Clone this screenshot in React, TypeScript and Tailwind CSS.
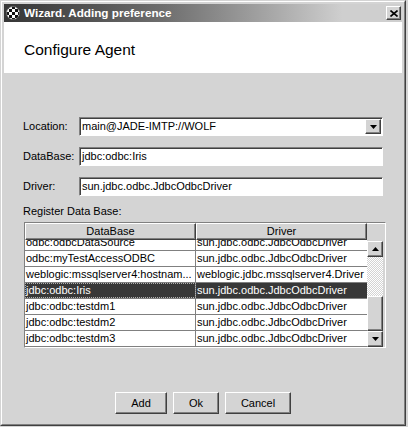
import React from "react";

const SUNKEN =
  "border border-t-[#808080] border-l-[#808080] border-b-white border-r-white shadow-[inset_1px_1px_0_#404040] bg-white";
const RAISED =
  "border border-t-white border-l-white border-b-[#404040] border-r-[#404040] shadow-[inset_-1px_-1px_0_#808080] bg-[#d4d4d4]";

const ROWS = [
  ["odbc:odbcDataSource", "sun.jdbc.odbc.JdbcOdbcDriver"],
  ["odbc:myTestAccessODBC", "sun.jdbc.odbc.JdbcOdbcDriver"],
  ["weblogic:mssqlserver4:hostnam...", "weblogic.jdbc.mssqlserver4.Driver"],
  ["jdbc:odbc:Iris", "sun.jdbc.odbc.JdbcOdbcDriver"],
  ["jdbc:odbc:testdm1", "sun.jdbc.odbc.JdbcOdbcDriver"],
  ["jdbc:odbc:testdm2", "sun.jdbc.odbc.JdbcOdbcDriver"],
  ["jdbc:odbc:testdm3", "sun.jdbc.odbc.JdbcOdbcDriver"],
];
const SELECTED = 3;

function Arrow({ dir }: { dir: "up" | "down" }) {
  return (
    <svg width="7" height="4" viewBox="0 0 7 4">
      {dir === "down" ? <path d="M0 0h7L3.5 4z" fill="#000" /> : <path d="M0 4h7L3.5 0z" fill="#000" />}
    </svg>
  );
}

function CheckerIcon() {
  return (
    <svg width="14" height="14" viewBox="0 0 14 14">
      <defs>
        <pattern id="chk" width="6" height="6" patternUnits="userSpaceOnUse">
          <rect width="6" height="6" fill="#fff" />
          <rect width="3" height="3" fill="#111" />
          <rect x="3" y="3" width="3" height="3" fill="#111" />
        </pattern>
      </defs>
      <circle cx="7" cy="7" r="6.5" fill="url(#chk)" stroke="#777" strokeWidth="0.8" />
    </svg>
  );
}

function Field({ value, combo }: { value: string; combo?: boolean }) {
  return (
    <div className={`${SUNKEN} flex-1 h-[19px] flex items-center pl-[2px] pr-[1px]`}>
      <span className="flex-1 whitespace-nowrap">{value}</span>
      {combo && (
        <div className={`${RAISED} w-[16px] h-[15px] flex items-center justify-center`}>
          <Arrow dir="down" />
        </div>
      )}
    </div>
  );
}

function FormRow({ label, value, combo }: { label: string; value: string; combo?: boolean }) {
  return (
    <div className="flex items-center h-[19px]">
      <span className="w-[56px]">{label}</span>
      <Field value={value} combo={combo} />
    </div>
  );
}

function Button({ label, width }: { label: string; width: string }) {
  return (
    <button className={`${RAISED} ${width} h-[22px] flex items-center justify-center text-[11px]`}>
      {label}
    </button>
  );
}

export default function App() {
  return (
    <div className="w-[408px] h-[427px] bg-[#d4d4d4] text-[11px] text-black font-['Liberation_Sans',Arial,sans-serif]">
      {/* window frame */}
      <div className="w-[406px] h-[426px] border border-t-[#d4d4d4] border-l-[#d4d4d4] border-b-[#404040] border-r-[#404040]">
        <div className="h-full border border-t-white border-l-white border-b-[#808080] border-r-[#808080] p-[2px] flex flex-col">
          {/* title bar */}
          <div className="h-[18px] flex items-center pl-[2px] pr-[1px] bg-linear-to-r from-[#363636] via-[#6e6e6e] via-40% to-[#cfcfcf] to-85%">
            <CheckerIcon />
            <span className="ml-[4px] flex-1 text-white font-bold text-[11.7px]">Wizard. Adding preference</span>
            <div className={`${RAISED} w-[15px] h-[14px] flex items-center justify-center`}>
              <svg width="8" height="7" viewBox="0 0 8 7">
                <path d="M0.5 0.5L7.5 6.5M7.5 0.5L0.5 6.5" stroke="#000" strokeWidth="1.6" />
              </svg>
            </div>
          </div>

          {/* header */}
          <div className="h-[51px] bg-white pl-[20px] pt-[19px]">
            <span className="text-[15.5px] leading-[18px] block">Configure Agent</span>
          </div>

          {/* body */}
          <div className="flex-1 px-[19px] pt-[44px] flex flex-col">
            <div className="flex flex-col gap-[11px]">
              <FormRow label="Location:" value="main@JADE-IMTP://WOLF" combo />
              <FormRow label="DataBase:" value="jdbc:odbc:Iris" />
              <FormRow label="Driver:" value="sun.jdbc.odbc.JdbcOdbcDriver" />
            </div>

            <div className="mt-[9px] h-[13px] leading-[13px]">Register Data Base:</div>

            {/* table */}
            <div className="mt-[4px] ml-[1px] w-[362px] border border-t-[#808080] border-l-[#808080] border-b-white border-r-white">
              <div className="flex h-[17px]">
                <div className={`${RAISED} w-[171px] flex items-center justify-center`}>DataBase</div>
                <div className={`${RAISED} w-[171px] flex items-center justify-center`}>Driver</div>
                <div className="flex-1 border-t border-white" />
              </div>
              <div className="flex h-[107px]">
                <div className="w-[342px] h-full overflow-hidden bg-white">
                  <div className="-mt-[5px]">
                    {ROWS.map(([db, drv], i) => {
                      const sel = i === SELECTED;
                      return (
                        <div
                          key={i}
                          className={`flex h-[16px] border-b border-[#808080] ${sel ? "bg-[#383838] text-white" : ""}`}
                        >
                          <div
                            className={`w-[171px] border-r border-[#808080] pl-[1px] leading-[15px] whitespace-nowrap overflow-hidden ${
                              sel ? "outline outline-1 outline-dotted outline-[#b0b0b0] -outline-offset-1" : ""
                            }`}
                          >
                            {db}
                          </div>
                          <div className="flex-1 pl-[1px] leading-[15px] whitespace-nowrap overflow-hidden">{drv}</div>
                        </div>
                      );
                    })}
                  </div>
                </div>
                {/* scrollbar */}
                <div className="w-[16px] h-full flex flex-col pt-[1px]">
                  <div className={`${RAISED} h-[16px] flex items-center justify-center`}>
                    <Arrow dir="up" />
                  </div>
                  <div className="h-[39px] bg-[repeating-conic-gradient(#d4d4d4_0%_25%,#ffffff_0%_50%)] bg-[length:2px_2px]" />
                  <div className={`${RAISED} h-[35px]`} />
                  <div className={`${RAISED} h-[16px] flex items-center justify-center`}>
                    <Arrow dir="down" />
                  </div>
                </div>
              </div>
            </div>

            {/* buttons */}
            <div className="mt-[44px] flex justify-center gap-[6px]">
              <Button label="Add" width="w-[52px]" />
              <Button label="Ok" width="w-[46px]" />
              <Button label="Cancel" width="w-[66px]" />
            </div>
          </div>
        </div>
      </div>
    </div>
  );
}
